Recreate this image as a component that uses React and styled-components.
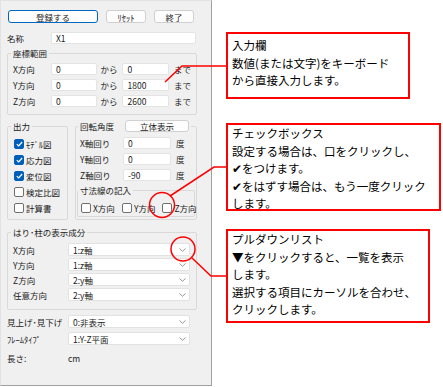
import styled, { createGlobalStyle } from "styled-components";

const GlobalStyle = createGlobalStyle`
  html, body {
    margin: 0;
    padding: 0;
    background: #ffffff;
  }
  #root {
    width: 443px;
    height: 387px;
  }
`;

const Page = styled.div`
  position: relative;
  display: flex;
  align-items: flex-start;
  width: 443px;
  height: 387px;
  overflow: hidden;
  background: #ffffff;
`;

const Dialog = styled.div`
  box-sizing: border-box;
  display: flex;
  flex-direction: column;
  width: 212px;
  height: 386px;
  padding: 9px 0 0 6px;
  background: #f0f0f0;
  border: 1px solid #a0a0a0;
  border-top-color: #e2e2e2;
  border-left-color: #e2e2e2;
  font-family: "Noto Sans CJK JP", sans-serif;
  font-size: 8.5px;
  line-height: 12px;
  color: #1a1a1a;
`;

const ButtonRow = styled.div`
  display: flex;
  gap: 8px;
  margin-left: 1px;
  height: 13px;
`;

const Button = styled.div`
  box-sizing: border-box;
  display: flex;
  align-items: center;
  justify-content: center;
  width: ${(p) => p.$w}px;
  height: ${(p) => p.$h || 13}px;
  margin-left: ${(p) => p.$ml || 0}px;
  background: #fdfdfd;
  border: 1px solid ${(p) => (p.$primary ? "#0067c0" : "#d0d0d0")};
  border-radius: 3px;
`;

const Row = styled.div`
  display: flex;
  align-items: center;
  height: ${(p) => p.$h || 12}px;
  margin-top: ${(p) => p.$mt || 0}px;
`;

const Label = styled.span`
  flex: none;
  width: ${(p) => p.$w}px;
  white-space: nowrap;
`;

const Field = styled.div`
  box-sizing: border-box;
  display: flex;
  align-items: center;
  width: ${(p) => p.$w}px;
  height: 12px;
  padding-left: 4px;
  background: #ffffff;
  border: 1px solid #e4e4e4;
  border-radius: 2px;
`;

const Unit = styled.span`
  flex: none;
  width: ${(p) => (p.$w ? `${p.$w}px` : "auto")};
  margin-left: ${(p) => p.$ml || 0}px;
`;

const Group = styled.fieldset`
  box-sizing: border-box;
  min-width: 0;
  width: ${(p) => (p.$w ? `${p.$w}px` : "auto")};
  margin: ${(p) => p.$margin || "0"};
  padding: ${(p) => p.$pad};
  border: 1px solid #d9d9d9;
  border-radius: 2px;
`;

const Legend = styled.legend`
  height: 12px;
  margin-left: -2px;
  padding: 0 2px;
  line-height: 12px;
`;

const LegendInner = styled.span`
  display: flex;
  align-items: center;
`;

const Stack = styled.div`
  display: flex;
  flex-direction: column;
  gap: ${(p) => p.$gap}px;
`;

const MiddleRow = styled.div`
  display: flex;
  gap: 7px;
  margin-top: 5px;
`;

const CheckItem = styled.div`
  display: flex;
  align-items: center;
  gap: 2px;
  height: 11px;
  white-space: nowrap;
`;

const Box = styled.span`
  box-sizing: border-box;
  display: flex;
  align-items: center;
  justify-content: center;
  flex: none;
  width: 10px;
  height: 10px;
  margin-left: 1px;
  border-radius: 2px;
  background: ${(p) => (p.$on ? "#005fb8" : "#ffffff")};
  border: 1px solid ${(p) => (p.$on ? "#005fb8" : "#6f6f6f")};
`;

const CheckLine = styled.div`
  display: flex;
  align-items: center;
  gap: 6px;
`;

const Combo = styled.div`
  box-sizing: border-box;
  display: flex;
  align-items: center;
  justify-content: space-between;
  width: 122px;
  height: 13px;
  padding: 0 3px 0 4px;
  background: #ffffff;
  border: 1px solid #e2e2e2;
  border-radius: 2px;
`;

const Annotations = styled.div`
  display: flex;
  flex-direction: column;
  padding: 32px 0 0 14px;
  font-family: "Noto Sans CJK JP", sans-serif;
  font-size: 11.5px;
  line-height: 17.5px;
  color: #000000;
`;

const Note = styled.div`
  box-sizing: border-box;
  width: ${(p) => p.$w}px;
  height: ${(p) => p.$h}px;
  margin-top: ${(p) => p.$mt || 0}px;
  padding: ${(p) => p.$pt || 0}px 0 0 4px;
  border: 2px solid #ff0000;
  background: #ffffff;
  white-space: nowrap;
`;

const Overlay = styled.svg`
  position: absolute;
  left: 0;
  top: 0;
  pointer-events: none;
`;

function Check({ on, children }) {
  return (
    <CheckItem>
      <Box $on={on}>
        {on && (
          <svg width="7" height="6" viewBox="0 0 7 6">
            <path d="M0.8 3.1 L2.7 4.9 L6.2 1" fill="none" stroke="#fff" strokeWidth="1.2" />
          </svg>
        )}
      </Box>
      <span>{children}</span>
    </CheckItem>
  );
}

function Chevron() {
  return (
    <svg width="7" height="4" viewBox="0 0 7 4">
      <path d="M0.5 0.5 L3.5 3.3 L6.5 0.5" fill="none" stroke="#8a8a8a" strokeWidth="0.9" />
    </svg>
  );
}

function ComboRow({ label, value, w, mt }) {
  return (
    <Row $h={13} $mt={mt}>
      <Label $w={w}>{label}</Label>
      <Combo>
        <span>{value}</span>
        <Chevron />
      </Combo>
    </Row>
  );
}

const coords = [
  ["X方向", "0", "0"],
  ["Y方向", "0", "1800"],
  ["Z方向", "0", "2600"],
];

const rotations = [
  ["X軸回り", "0"],
  ["Y軸回り", "0"],
  ["Z軸回り", "-90"],
];

const outputs = [
  ["ﾓﾃﾞﾙ図", true],
  ["応力図", true],
  ["変位図", true],
  ["検定比図", false],
  ["計算書", false],
];

const beams = [
  ["X方向", "1:z軸"],
  ["Y方向", "1:z軸"],
  ["Z方向", "2:y軸"],
  ["任意方向", "2:y軸"],
];

export default function App() {
  return (
    <Page>
      <GlobalStyle />
      <Dialog>
        <ButtonRow>
          <Button $w={90} $primary>登録する</Button>
          <Button $w={40}>ﾘｾｯﾄ</Button>
          <Button $w={40}>終了</Button>
        </ButtonRow>

        <Row $mt={9}>
          <Label $w={44}>名称</Label>
          <Field $w={145}>X1</Field>
        </Row>

        <Group $w={190} $margin="3px 0 0 0" $pad="4px 5px 7px 5px">
          <Legend>座標範囲</Legend>
          <Stack $gap={4}>
            {coords.map(([dir, from, to]) => (
              <Row key={dir}>
                <Label $w={38}>{dir}</Label>
                <Field $w={47}>{from}</Field>
                <Unit $w={25}>
                  <Unit $ml={3}>から</Unit>
                </Unit>
                <Field $w={47}>{to}</Field>
                <Unit $ml={5}>まで</Unit>
              </Row>
            ))}
          </Stack>
        </Group>

        <MiddleRow>
          <Group $w={61} $pad="6px 4px 6px 5px">
            <Legend>出力</Legend>
            <Stack $gap={5}>
              {outputs.map(([name, on]) => (
                <Check key={name} on={on}>{name}</Check>
              ))}
            </Stack>
          </Group>

          <Group $w={122} $pad="5px 0 2px 4px">
            <Legend>
              <LegendInner>
                回転角度
                <Button $w={64} $h={12} $ml={11}>立体表示</Button>
              </LegendInner>
            </Legend>
            <Stack $gap={4}>
              {rotations.map(([axis, val]) => (
                <Row key={axis}>
                  <Label $w={43}>{axis}</Label>
                  <Field $w={48}>{val}</Field>
                  <Unit $ml={5}>度</Unit>
                </Row>
              ))}
            </Stack>
            <Group $margin="3px 1px 0 -3px" $pad="6px 2px 3px 2px">
              <Legend>寸法線の記入</Legend>
              <CheckLine>
                <Check>X方向</Check>
                <Check>Y方向</Check>
                <Check>Z方向</Check>
              </CheckLine>
            </Group>
          </Group>
        </MiddleRow>

        <Group $w={190} $margin="6px 0 0 0" $pad="5px 5px 8px 5px">
          <Legend>はり･柱の表示成分</Legend>
          <Stack $gap={2}>
            {beams.map(([dir, val]) => (
              <ComboRow key={dir} label={dir} value={val} w={55} />
            ))}
          </Stack>
        </Group>

        <ComboRow label="見上げ･見下げ" value="0:非表示" w={61} mt={5} />
        <ComboRow label="ﾌﾚｰﾑﾀｲﾌﾟ" value="1:Y-Z平面" w={61} mt={4} />

        <Row $mt={7}>
          <Label $w={61}>長さ:</Label>
          <span>cm</span>
        </Row>
      </Dialog>

      <Annotations>
        <Note $w={184} $h={67} $pt={3}>
          入力欄
          <br />
          数値(または文字)をキーボード
          <br />
          から直接入力します。
        </Note>
        <Note $w={215} $h={88} $mt={24}>
          チェックボックス
          <br />
          設定する場合は、口をクリックし、
          <br />
          ✔をつけます。
          <br />
          ✔をはずす場合は、もう一度クリック
          <br />
          します。
        </Note>
        <Note $w={204} $h={94} $mt={18}>
          プルダウンリスト
          <br />
          ▼をクリックすると、一覧を表示
          <br />
          します。
          <br />
          選択する項目にカーソルを合わせ、
          <br />
          クリックします。
        </Note>
      </Annotations>

      <Overlay width="443" height="387" viewBox="0 0 443 387">
        <g fill="none" stroke="#ff0000" strokeWidth="1.5">
          <polyline points="165,82 182,66 227,66" />
          <polyline points="170,196 214,167 227,167" />
          <polyline points="192,258 211,276 227,276" />
          <circle cx="162" cy="205" r="12.5" />
          <circle cx="183" cy="249" r="12" />
        </g>
      </Overlay>
    </Page>
  );
}
